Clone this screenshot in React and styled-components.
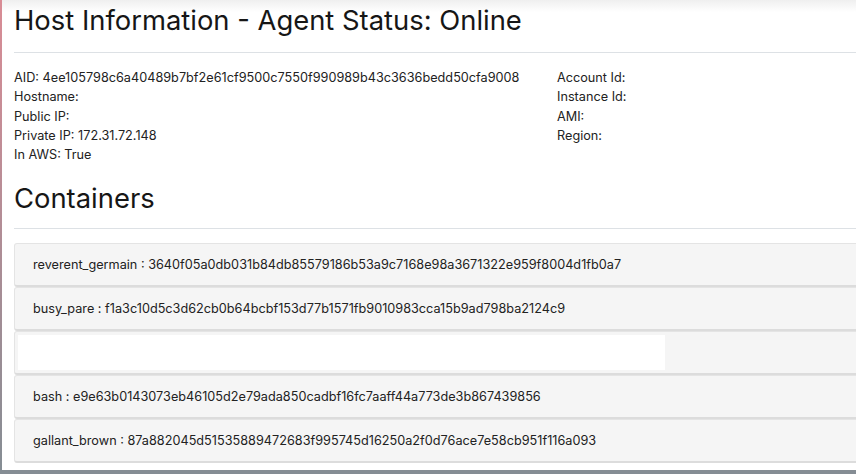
import React from 'react';
import styled, { createGlobalStyle } from 'styled-components';

const GlobalStyle = createGlobalStyle`
  html, body {
    margin: 0;
    padding: 0;
    background: #ffffff;
  }
  body {
    font-family: Inter, "Noto Sans", "Liberation Sans", sans-serif;
    color: #212529;
  }
`;

const Frame = styled.div`
  height: 474px;
  width: 856px;
  box-sizing: border-box;
  overflow: hidden;
  border-left: 2px solid #c98a92;
  border-bottom: 4px solid #8b9298;
  border-image: linear-gradient(to bottom, #d98c95 0%, #b98d96 40%, #858d94 100%) 1;
  background: linear-gradient(to bottom, #efefef 0px, #ffffff 12px);
`;

const Page = styled.div`
  padding: 0 0 0 12px;
  margin-right: -20px;
`;

const Title = styled.h3`
  margin: 0;
  padding: 3px 0 0;
  font-size: 27.4px;
  font-weight: 400;
  line-height: 34px;
  color: #161616;
`;

const Rule = styled.hr`
  margin: ${p => p.$top || 14}px 0 0;
  border: 0;
  border-top: 1px solid #dde1e5;
`;

const InfoGrid = styled.div`
  display: grid;
  grid-template-columns: 543px 1fr;
  margin-top: 15px;
`;

const InfoColumn = styled.div`
  display: flex;
  flex-direction: column;
`;

const InfoLine = styled.div`
  font-size: 12.7px;
  line-height: 19.3px;
  height: 19.3px;
  color: #222;
  white-space: nowrap;
`;

const SectionTitle = styled.h3`
  margin: 17px 0 0;
  font-size: 27.4px;
  font-weight: 400;
  line-height: 34px;
  color: #161616;
`;

const CardList = styled.div`
  display: flex;
  flex-direction: column;
  margin-top: 14px;
`;

const Card = styled.div`
  height: 41px;
  display: flex;
  align-items: center;
  padding-left: 18px;
  background: #f5f5f5;
  border: 1px solid #e4e4e4;
  border-bottom: 2px solid #dcdcdc;
  border-radius: 3px;
  font-size: 12.7px;
  color: #222;
  white-space: nowrap;
`;

const Redacted = styled.div`
  width: 647px;
  height: 35px;
  margin-left: -15px;
  background: #ffffff;
`;

const host = {
  left: [
    'AID: 4ee105798c6a40489b7bf2e61cf9500c7550f990989b43c3636bedd50cfa9008',
    'Hostname:',
    'Public IP:',
    'Private IP: 172.31.72.148',
    'In AWS: True',
  ],
  right: ['Account Id:', 'Instance Id:', 'AMI:', 'Region:'],
};

const containers = [
  'reverent_germain : 3640f05a0db031b84db85579186b53a9c7168e98a3671322e959f8004d1fb0a7',
  'busy_pare : f1a3c10d5c3d62cb0b64bcbf153d77b1571fb9010983cca15b9ad798ba2124c9',
  null,
  'bash : e9e63b0143073eb46105d2e79ada850cadbf16fc7aaff44a773de3b867439856',
  'gallant_brown : 87a882045d51535889472683f995745d16250a2f0d76ace7e58cb951f116a093',
];

export default function App() {
  return (
    <>
      <GlobalStyle />
      <Frame>
        <Page>
          <Title>Host Information - Agent Status: Online</Title>
          <Rule $top={15} />
          <InfoGrid>
            <InfoColumn>
              {host.left.map(line => <InfoLine key={line}>{line}</InfoLine>)}
            </InfoColumn>
            <InfoColumn>
              {host.right.map(line => <InfoLine key={line}>{line}</InfoLine>)}
            </InfoColumn>
          </InfoGrid>
          <SectionTitle>Containers</SectionTitle>
          <Rule $top={13} />
          <CardList>
            {containers.map((c, i) => (
              <Card key={i}>{c || <Redacted />}</Card>
            ))}
          </CardList>
        </Page>
      </Frame>
    </>
  );
}
